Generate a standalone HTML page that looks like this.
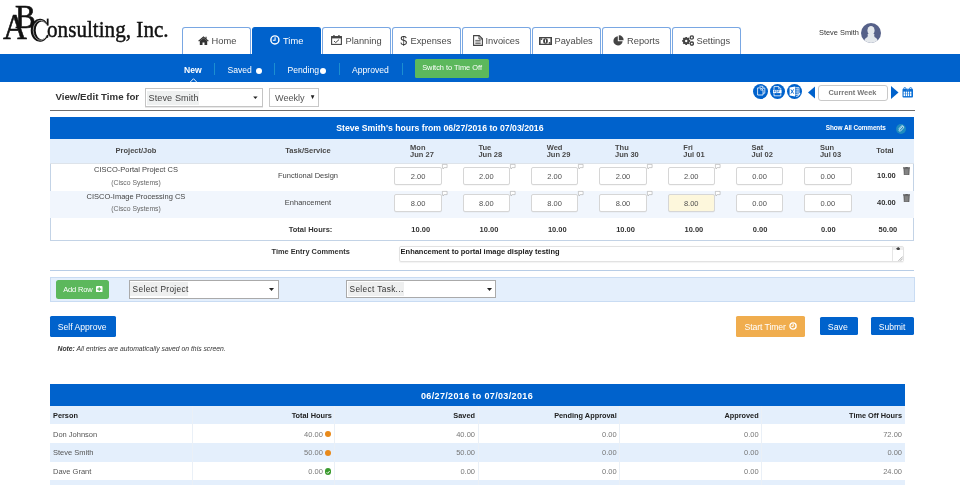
<!DOCTYPE html>
<html><head><meta charset="utf-8">
<style>
*{margin:0;padding:0;box-sizing:border-box}
html,body{width:960px;height:485px;overflow:hidden;background:#fff}
body{font-family:"Liberation Sans",sans-serif;color:#333;position:relative}
.a{position:absolute}
.ser{font-family:"Liberation Serif",serif;color:#111}
.tab{position:absolute;top:27px;height:27px;width:69px;border:1px solid #79a7e3;border-bottom:none;border-radius:3px 3px 0 0;background:#fff;color:#444;font-size:9px;line-height:26px;text-align:center;white-space:nowrap}
.tt{top:35px;font-size:9.3px;line-height:13px;color:#4a4a4a;white-space:nowrap}
.tab.act{background:#0062cc;border-color:#0062cc;color:#fff}
.bar{left:0;top:54px;width:960px;height:27.8px;background:#0062cc}
.sub{color:#fff;font-size:8.6px;line-height:12px;top:64px;white-space:nowrap}
.sep{top:63px;width:1px;height:12px;background:#1c8fd0}
.tbl{border:1px solid #c3d3e6}
.hd{background:#0062cc}
.lb{background:#e4effc}
.th{font-size:7.5px;font-weight:bold;color:#484848;white-space:nowrap}
.td{font-size:7.5px;color:#444;white-space:nowrap}
.inp{width:47.5px;height:17.5px;border:1px solid #d6d6d6;border-radius:2px;background:#fff;font-size:7.5px;color:#505050;text-align:center;line-height:17.2px;box-shadow:0 0.5px 0.5px rgba(0,0,0,0.06)}
.cm{overflow:visible}
.btn{color:#fff;border-radius:1.6px;text-align:center;white-space:nowrap}
.bt{font-family:"Liberation Sans",sans-serif;font-size:7.5px;color:#333;white-space:nowrap}
.bh{font-weight:bold;color:#222;font-size:7.35px}
.bv{color:#777;text-align:right}
</style></head><body><div style="position:absolute;left:0;top:0;width:960px;height:485px;will-change:transform">

<!-- logo -->
<div class="a ser" style="left:3.3px;top:8.5px;font-size:36px;line-height:36px;transform:scaleX(0.92);transform-origin:0 0;-webkit-text-stroke:0.6px #111">A</div>
<div class="a ser" style="left:14.8px;top:-2.5px;font-size:34.5px;line-height:36px;transform:scaleX(0.9);transform-origin:0 0;-webkit-text-stroke:0.7px #111">B</div>
<svg class="a" style="left:28px;top:16px" width="22" height="28" viewBox="28 16 22 28"><path d="M47.2 23.2 A9.2 11.5 0 1 0 47.4 36.9 L46.6 35.6 A6.0 9.0 0 1 1 46.3 24.6 Z" fill="#111"/><path d="M46.2 24.0 A7.3 10.0 0 1 0 46.4 36.2" fill="none" stroke="#fff" stroke-width="0.55"/><path d="M46.8 18.6 H48.6 V25.6 H46.8 Z" fill="#111"/><path d="M46.6 35.2 L48.3 34.6 L48.2 37.6 L46.8 38 Z" fill="#111"/></svg>
<div class="a ser" style="left:47px;top:15.4px;font-size:23px;line-height:30px;transform:scaleX(0.92);transform-origin:0 0;-webkit-text-stroke:0.45px #111;white-space:nowrap">onsulting, Inc.</div>

<!-- tabs -->
<div class="tab" style="left:182px"></div>
<div class="tab act" style="left:252px"></div>
<div class="tab" style="left:322px"></div>
<div class="tab" style="left:392px"></div>
<div class="tab" style="left:462px"></div>
<div class="tab" style="left:532px"></div>
<div class="tab" style="left:602px"></div>
<div class="tab" style="left:672px"></div>
<div class="a tt" style="left:211.5px">Home</div>
<div class="a tt" style="left:283px;color:#fff">Time</div>
<div class="a tt" style="left:345.5px">Planning</div>
<div class="a tt" style="left:410.5px">Expenses</div>
<div class="a tt" style="left:485.5px">Invoices</div>
<div class="a tt" style="left:554.5px">Payables</div>
<div class="a tt" style="left:627px">Reports</div>
<div class="a tt" style="left:696.5px">Settings</div>
<!-- tab icons -->
<svg class="a" style="left:197.5px;top:36px" width="11" height="9" viewBox="0 0 11 9"><path d="M5.5 0.3 L0.2 4.8 L1 5.6 L5.5 1.8 L10 5.6 L10.8 4.8 L8.6 2.9 V0.8 H7.5 V2 Z M1.8 5 V9 H4.5 V6.5 H6.5 V9 H9.2 V5 L5.5 2 Z" fill="#333"/></svg>
<svg class="a" style="left:269.8px;top:35.3px" width="9.8" height="9.8" viewBox="0 0 10 10"><circle cx="5" cy="5" r="4.1" fill="none" stroke="#fff" stroke-width="1.5"/><path d="M5.2 2.4 V5.4 H2.9" fill="none" stroke="#fff" stroke-width="1.1"/></svg>
<svg class="a" style="left:331px;top:35px" width="11" height="10" viewBox="0 0 11 10"><rect x="0.6" y="1.6" width="9.8" height="7.8" fill="none" stroke="#444" stroke-width="1.1"/><rect x="0.6" y="1.6" width="9.8" height="1.8" fill="#444"/><rect x="2.3" y="0" width="1.3" height="2.5" fill="#444"/><rect x="7.3" y="0" width="1.3" height="2.5" fill="#444"/><path d="M3 6 L4.7 7.6 L8 4.6" fill="none" stroke="#444" stroke-width="1"/></svg>
<div class="a" style="left:400.3px;top:33.6px;font-size:12.3px;line-height:14px;color:#333">$</div>
<svg class="a" style="left:472.5px;top:35px" width="10" height="11" viewBox="0 0 10 11"><path d="M0.6 0.6 H6.2 L9.4 3.8 V10.4 H0.6 Z" fill="none" stroke="#444" stroke-width="1.1"/><path d="M6 0.6 V4 H9.4" fill="none" stroke="#444" stroke-width="1"/><path d="M2.3 5.4 H7.7 M2.3 7 H7.7 M2.3 8.6 H7.7" stroke="#444" stroke-width="0.8"/></svg>
<svg class="a" style="left:539px;top:36.5px" width="13" height="8" viewBox="0 0 13 8"><rect x="0" y="0" width="13" height="8" fill="#444"/><rect x="1.6" y="1.3" width="9.8" height="5.4" fill="#fff"/><ellipse cx="6.5" cy="4" rx="2.4" ry="2.7" fill="#444"/><rect x="6" y="2.5" width="1" height="3" fill="#fff"/><rect x="1.6" y="1.3" width="1.6" height="1.6" fill="#444"/><rect x="9.8" y="5.1" width="1.6" height="1.6" fill="#444"/></svg>
<svg class="a" style="left:612.5px;top:34.5px" width="11" height="11" viewBox="0 0 11 11"><path d="M4.8 1.3 A4.6 4.6 0 1 0 9.6 6.2 H4.8 Z" fill="#444"/><path d="M5.8 0.3 A4.6 4.6 0 0 1 10.6 5.2 H5.8 Z" fill="#444"/></svg>
<svg class="a" style="left:681.5px;top:34.5px" width="12.5" height="11" viewBox="0 0 12.5 11"><g fill="#444"><circle cx="4.2" cy="6" r="3"/><path d="M3.4 1.9 h1.6 l0.3 1.2 l1.2 -0.6 l1.1 1.1 l-0.6 1.2 l1.2 0.3 v1.6 l-1.2 0.3 l0.6 1.2 l-1.1 1.1 l-1.2 -0.6 l-0.3 1.2 h-1.6 l-0.3 -1.2 l-1.2 0.6 l-1.1 -1.1 l0.6 -1.2 l-1.2 -0.3 v-1.6 l1.2 -0.3 l-0.6 -1.2 l1.1 -1.1 l1.2 0.6 z"/><circle cx="9.8" cy="2.5" r="2.3"/><circle cx="9.8" cy="8.6" r="2.3"/></g><circle cx="4.2" cy="6" r="1.2" fill="#fff"/><circle cx="9.8" cy="2.5" r="0.9" fill="#fff"/><circle cx="9.8" cy="8.6" r="0.9" fill="#fff"/></svg>

<!-- user -->
<div class="a" style="left:819px;top:27.3px;font-size:7.4px;line-height:11px;color:#333;white-space:nowrap">Steve Smith</div>
<svg class="a" style="left:861.4px;top:22.75px" width="20" height="20" viewBox="0 0 20 20"><defs><clipPath id="av"><circle cx="10" cy="10" r="10"/></clipPath></defs><circle cx="10" cy="10" r="10" fill="#566189"/><g clip-path="url(#av)" fill="#e4e8ec"><ellipse cx="10" cy="7.6" rx="3.6" ry="4.6"/><path d="M6.6 11 Q7.2 13.2 6.2 14.2 Q3.2 15.2 2.6 20 H17.4 Q16.8 15.2 13.8 14.2 Q12.8 13.2 13.4 11 Z"/></g></svg>

<!-- blue sub bar -->
<div class="a bar"></div>
<div class="a sub" style="left:184px;font-weight:bold">New</div>
<svg class="a" style="left:190px;top:77.5px" width="7" height="4" viewBox="0 0 7 4"><path d="M0.3 4 L3.5 0.7 L6.7 4" fill="none" stroke="#fff" stroke-width="0.9"/></svg>
<div class="a sep" style="left:214px"></div>
<div class="a sub" style="left:227.5px">Saved</div>
<div class="a" style="left:255.5px;top:68px;width:6px;height:6px;border-radius:50%;background:#fff"></div>
<div class="a sep" style="left:274px"></div>
<div class="a sub" style="left:287.5px">Pending</div>
<div class="a" style="left:319.5px;top:68px;width:6px;height:6px;border-radius:50%;background:#fff"></div>
<div class="a sep" style="left:338.5px"></div>
<div class="a sub" style="left:352px">Approved</div>
<div class="a sep" style="left:402px"></div>
<div class="a btn" style="left:415px;top:59px;width:74.2px;height:18.9px;background:#5cb85c;font-size:7.4px;line-height:18.4px;border-radius:1.5px">Switch to Time Off</div>

<!-- view/edit row -->
<div class="a" style="left:55.5px;top:91px;font-size:9.7px;line-height:12px;font-weight:bold;color:#333">View/Edit Time for</div>
<div class="a" style="left:145px;top:88px;width:117.5px;height:19px;border:1px solid #c4c4c4;background:#fff;box-shadow:0 1px 0 #e8e8e8"></div>
<div class="a" style="left:146.5px;top:91px;width:52.5px;height:14px;background:#eef0f0"></div>
<div class="a" style="left:148.5px;top:90.5px;font-size:9.1px;line-height:14px;color:#444;letter-spacing:0.1px">Steve Smith</div>
<svg class="a" style="left:252px;top:95px" width="7" height="5" viewBox="0 0 7 5"><path d="M1.2 1.4 H5.6 L3.4 4 Z" fill="#222"/></svg>
<div class="a" style="left:269px;top:88px;width:50px;height:18.5px;border:1px solid #c8c8c8;background:#fff"></div>
<div class="a" style="left:275px;top:91.5px;font-size:9.1px;line-height:13px;color:#555">Weekly</div>
<svg class="a" style="left:310px;top:94px" width="6" height="7" viewBox="0 0 6 7"><path d="M0.8 1.2 H4.4 L2.6 5.2 Z" fill="#222"/></svg>
<div class="a" style="left:50px;top:110px;width:864.5px;height:1px;background:#6e6e6e"></div>

<!-- export icons -->
<svg class="a" style="left:752.5px;top:84px" width="15" height="15" viewBox="0 0 15 15"><circle cx="7.5" cy="7.5" r="7.5" fill="#0062cc"/><path d="M6.4 2.2 H9.6 L11.8 4.4 V9.2 H10" fill="none" stroke="#fff" stroke-width="0.75"/><path d="M9.5 2.3 V4.5 H11.7" fill="none" stroke="#fff" stroke-width="0.6"/><path d="M4.6 3.9 H7.8 L10 6.1 V11 H4.6 Z" fill="#0062cc" stroke="#fff" stroke-width="0.8"/><path d="M7.7 4 V6.2 H9.9" fill="none" stroke="#fff" stroke-width="0.6"/></svg>
<svg class="a" style="left:769.5px;top:84px" width="15" height="15" viewBox="0 0 15 15"><circle cx="7.5" cy="7.5" r="7.5" fill="#0062cc"/><path d="M4 5.8 V2.6 H8.8 L10.8 4.6 V5.8 M10.8 9.2 V11.8 H4 V9.2" fill="none" stroke="#fff" stroke-width="0.8"/><path d="M8.6 2.6 V4.8 H10.8" fill="none" stroke="#fff" stroke-width="0.6"/><rect x="3" y="5.9" width="8.6" height="3.2" fill="#fff"/><path d="M4.2 8.4 V6.6 H5.2 V7.5 H4.2 M6.2 6.6 V8.4 H7.2 V6.6 Z M8.3 8.4 V6.6 H9.6 M8.3 7.5 H9.3" fill="none" stroke="#0062cc" stroke-width="0.5"/></svg>
<svg class="a" style="left:786.5px;top:84px" width="15" height="15" viewBox="0 0 15 15"><circle cx="7.5" cy="7.5" r="7.5" fill="#0062cc"/><path d="M8.4 3.6 H12 V10.6 H8.4" fill="none" stroke="#fff" stroke-width="0.7"/><path d="M8.6 5.4 H11.8 M8.6 7.1 H11.8 M8.6 8.8 H11.8 M10.2 3.6 V10.6" stroke="#fff" stroke-width="0.5"/><path d="M2.6 3.4 L8.2 2.6 V12.4 L2.6 11.6 Z" fill="#fff"/><path d="M3.9 5.4 L6.6 9.6 M6.6 5.4 L3.9 9.6" stroke="#0062cc" stroke-width="0.9"/><path d="M9.2 12.4 Q12 12.6 12.6 9.8" fill="none" stroke="#fff" stroke-width="0.9"/><path d="M11.6 10 L12.7 8.8 L13.6 10.2 Z" fill="#fff"/></svg>
<svg class="a" style="left:807.5px;top:86px" width="7.5" height="13" viewBox="0 0 7.5 13"><path d="M7.5 0 V13 L0 6.5 Z" fill="#0062cc"/></svg>
<div class="a" style="left:817.5px;top:85px;width:70px;height:15.5px;border:1px solid #c9c9c9;border-radius:3px;background:#fff;font-size:7.4px;font-weight:bold;color:#777;text-align:center;line-height:14px">Current Week</div>
<svg class="a" style="left:891px;top:86px" width="7.5" height="13" viewBox="0 0 7.5 13"><path d="M0 0 V13 L7.5 6.5 Z" fill="#0062cc"/></svg>
<svg class="a" style="left:902px;top:86.8px" width="11.5" height="11" viewBox="0 0 11.5 11"><rect x="0.5" y="1.8" width="10.5" height="8.7" rx="1" fill="#0a6fd6"/><circle cx="2.8" cy="1.6" r="1.1" fill="none" stroke="#0a6fd6" stroke-width="0.8"/><circle cx="8.6" cy="1.6" r="1.1" fill="none" stroke="#0a6fd6" stroke-width="0.8"/><path d="M4.4 3.4 Q5.75 1.8 7.1 3.4" fill="none" stroke="#7fb3ea" stroke-width="0.6"/><g fill="#fff"><rect x="1.6" y="4.6" width="1.4" height="2.1"/><rect x="3.7" y="4.6" width="1.4" height="2.1"/><rect x="5.8" y="4.6" width="1.4" height="2.1"/><rect x="8" y="4.6" width="1.4" height="2.1"/><rect x="1.6" y="7.1" width="1.4" height="2"/><rect x="3.7" y="7.1" width="1.4" height="2"/><rect x="5.8" y="7.1" width="1.4" height="2"/><rect x="8" y="7.1" width="1.4" height="2"/></g></svg>

<!-- main table -->
<div class="a tbl" style="left:49.5px;top:117px;width:864.5px;height:124px"></div>
<div class="a hd" style="left:49.5px;top:117px;width:864.5px;height:21.5px"></div>
<div class="a lb" style="left:50px;top:138.5px;width:863.5px;height:25.5px;border-bottom:1px solid #dde3ea"></div>
<div class="a" style="left:50px;top:191.2px;width:863.5px;height:27px;background:#f1f6fd"></div>
<div class="a" style="left:336.2px;top:122.5px;font-size:8.7px;line-height:11px;font-weight:bold;color:#fff;white-space:nowrap">Steve Smith's hours from 06/27/2016 to 07/03/2016</div>
<div class="a" style="left:825.8px;top:122.8px;font-size:6.4px;line-height:10px;font-weight:bold;color:#fff;letter-spacing:-0.1px">Show All Comments</div>
<svg class="a" style="left:895.7px;top:123.9px" width="10" height="10" viewBox="0 0 10 10"><circle cx="5" cy="5" r="4.9" fill="#1e8cc0"/><path d="M6.6 2.4 L3.2 6 A0.9 0.9 0 0 0 4.4 7.2 L7.2 4.2 A1.4 1.4 0 0 0 5.2 2.2 L2.6 5.2" fill="none" stroke="#fff" stroke-width="0.7"/></svg>
<div class="a th" style="left:86px;top:146px;width:100px;text-align:center;line-height:10px">Project/Job</div>
<div class="a th" style="left:258px;top:146px;width:100px;text-align:center;line-height:10px">Task/Service</div>
<div class="a th" style="left:860px;top:146px;width:50px;text-align:center;line-height:10px">Total</div>
<div class="a td" style="left:76px;top:165px;width:120px;text-align:center;line-height:10px">CISCO-Portal Project CS</div>
<div class="a td" style="left:76px;top:177.5px;width:120px;text-align:center;line-height:10px;font-size:6.8px;color:#666">(Cisco Systems)</div>
<div class="a td" style="left:76px;top:192px;width:120px;text-align:center;line-height:10px">CISCO-Image Processing CS</div>
<div class="a td" style="left:76px;top:204px;width:120px;text-align:center;line-height:10px;font-size:6.8px;color:#666">(Cisco Systems)</div>
<div class="a td" style="left:248px;top:171px;width:120px;text-align:center;line-height:10px">Functional Design</div>
<div class="a td" style="left:248px;top:197.5px;width:120px;text-align:center;line-height:10px">Enhancement</div>
<div class="a th" style="left:250.5px;top:224.7px;width:120px;text-align:center;line-height:10px;color:#333">Total Hours:</div>
<div class="a th" style="left:410.1px;top:143.6px;line-height:7.4px">Mon<br>Jun 27</div>
<div class="a inp" style="left:394.3px;top:167.1px">2.00</div>
<div class="a inp" style="left:394.3px;top:194.3px;background:#fff">8.00</div>
<svg class="a cm" style="left:441.7px;top:164.2px" width="5.5" height="5.5" viewBox="0 0 5.5 5.5"><path d="M0.4 0.4 H5.1 V3.6 H2.2 L1 5 V3.6 H0.4 Z" fill="#fff" stroke="#aaa" stroke-width="0.6"/></svg>
<svg class="a cm" style="left:441.7px;top:191.4px" width="5.5" height="5.5" viewBox="0 0 5.5 5.5"><path d="M0.4 0.4 H5.1 V3.6 H2.2 L1 5 V3.6 H0.4 Z" fill="#fff" stroke="#aaa" stroke-width="0.6"/></svg>
<div class="a th" style="left:411.3px;top:224.7px;line-height:10px;color:#333">10.00</div>
<div class="a th" style="left:478.4px;top:143.6px;line-height:7.4px">Tue<br>Jun 28</div>
<div class="a inp" style="left:462.6px;top:167.1px">2.00</div>
<div class="a inp" style="left:462.6px;top:194.3px;background:#fff">8.00</div>
<svg class="a cm" style="left:510.0px;top:164.2px" width="5.5" height="5.5" viewBox="0 0 5.5 5.5"><path d="M0.4 0.4 H5.1 V3.6 H2.2 L1 5 V3.6 H0.4 Z" fill="#fff" stroke="#aaa" stroke-width="0.6"/></svg>
<svg class="a cm" style="left:510.0px;top:191.4px" width="5.5" height="5.5" viewBox="0 0 5.5 5.5"><path d="M0.4 0.4 H5.1 V3.6 H2.2 L1 5 V3.6 H0.4 Z" fill="#fff" stroke="#aaa" stroke-width="0.6"/></svg>
<div class="a th" style="left:479.6px;top:224.7px;line-height:10px;color:#333">10.00</div>
<div class="a th" style="left:546.7px;top:143.6px;line-height:7.4px">Wed<br>Jun 29</div>
<div class="a inp" style="left:530.9px;top:167.1px">2.00</div>
<div class="a inp" style="left:530.9px;top:194.3px;background:#fff">8.00</div>
<svg class="a cm" style="left:578.3px;top:164.2px" width="5.5" height="5.5" viewBox="0 0 5.5 5.5"><path d="M0.4 0.4 H5.1 V3.6 H2.2 L1 5 V3.6 H0.4 Z" fill="#fff" stroke="#aaa" stroke-width="0.6"/></svg>
<svg class="a cm" style="left:578.3px;top:191.4px" width="5.5" height="5.5" viewBox="0 0 5.5 5.5"><path d="M0.4 0.4 H5.1 V3.6 H2.2 L1 5 V3.6 H0.4 Z" fill="#fff" stroke="#aaa" stroke-width="0.6"/></svg>
<div class="a th" style="left:547.9px;top:224.7px;line-height:10px;color:#333">10.00</div>
<div class="a th" style="left:615.0px;top:143.6px;line-height:7.4px">Thu<br>Jun 30</div>
<div class="a inp" style="left:599.2px;top:167.1px">2.00</div>
<div class="a inp" style="left:599.2px;top:194.3px;background:#fff">8.00</div>
<svg class="a cm" style="left:646.6px;top:164.2px" width="5.5" height="5.5" viewBox="0 0 5.5 5.5"><path d="M0.4 0.4 H5.1 V3.6 H2.2 L1 5 V3.6 H0.4 Z" fill="#fff" stroke="#aaa" stroke-width="0.6"/></svg>
<svg class="a cm" style="left:646.6px;top:191.4px" width="5.5" height="5.5" viewBox="0 0 5.5 5.5"><path d="M0.4 0.4 H5.1 V3.6 H2.2 L1 5 V3.6 H0.4 Z" fill="#fff" stroke="#aaa" stroke-width="0.6"/></svg>
<div class="a th" style="left:616.2px;top:224.7px;line-height:10px;color:#333">10.00</div>
<div class="a th" style="left:683.3px;top:143.6px;line-height:7.4px">Fri<br>Jul 01</div>
<div class="a inp" style="left:667.5px;top:167.1px">2.00</div>
<div class="a inp" style="left:667.5px;top:194.3px;background:#fdf7dc">8.00</div>
<svg class="a cm" style="left:714.9px;top:164.2px" width="5.5" height="5.5" viewBox="0 0 5.5 5.5"><path d="M0.4 0.4 H5.1 V3.6 H2.2 L1 5 V3.6 H0.4 Z" fill="#fff" stroke="#aaa" stroke-width="0.6"/></svg>
<svg class="a cm" style="left:714.9px;top:191.4px" width="5.5" height="5.5" viewBox="0 0 5.5 5.5"><path d="M0.4 0.4 H5.1 V3.6 H2.2 L1 5 V3.6 H0.4 Z" fill="#fff" stroke="#aaa" stroke-width="0.6"/></svg>
<div class="a th" style="left:684.5px;top:224.7px;line-height:10px;color:#333">10.00</div>
<div class="a th" style="left:751.6px;top:143.6px;line-height:7.4px">Sat<br>Jul 02</div>
<div class="a inp" style="left:735.8px;top:167.1px">0.00</div>
<div class="a inp" style="left:735.8px;top:194.3px;background:#fff">0.00</div>
<div class="a th" style="left:752.8px;top:224.7px;line-height:10px;color:#333">0.00</div>
<div class="a th" style="left:819.9px;top:143.6px;line-height:7.4px">Sun<br>Jul 03</div>
<div class="a inp" style="left:804.1px;top:167.1px">0.00</div>
<div class="a inp" style="left:804.1px;top:194.3px;background:#fff">0.00</div>
<div class="a th" style="left:821.1px;top:224.7px;line-height:10px;color:#333">0.00</div>
<div class="a th" style="left:877px;top:171px;line-height:10px;color:#333">10.00</div>
<div class="a th" style="left:877px;top:197.5px;line-height:10px;color:#333">40.00</div>
<div class="a th" style="left:878.5px;top:224.7px;line-height:10px;color:#333">50.00</div>
<svg class="a" style="left:902.8px;top:166.7px" width="7.2" height="8.3" viewBox="0 0 7.2 8.3"><rect x="0" y="0.3" width="7.2" height="1.2" fill="#555"/><rect x="2.4" y="0" width="2.4" height="0.8" fill="#555"/><path d="M0.8 1.5 H6.4 L6 8.3 H1.2 Z" fill="#777" stroke="#444" stroke-width="0.5"/><path d="M2.6 2.4 V7.4 M3.6 2.4 V7.4 M4.6 2.4 V7.4" stroke="#999" stroke-width="0.4"/></svg>
<svg class="a" style="left:902.8px;top:193.8px" width="7.2" height="8.3" viewBox="0 0 7.2 8.3"><rect x="0" y="0.3" width="7.2" height="1.2" fill="#555"/><rect x="2.4" y="0" width="2.4" height="0.8" fill="#555"/><path d="M0.8 1.5 H6.4 L6 8.3 H1.2 Z" fill="#777" stroke="#444" stroke-width="0.5"/><path d="M2.6 2.4 V7.4 M3.6 2.4 V7.4 M4.6 2.4 V7.4" stroke="#999" stroke-width="0.4"/></svg>

<!-- comments row -->
<div class="a th" style="left:271.5px;top:246.5px;line-height:10px;font-size:7.4px;color:#333">Time Entry Comments</div>
<div class="a" style="left:398.5px;top:246px;width:505.5px;height:15.5px;border:1px solid #e2e2e2;border-radius:2px;background:#fff;box-shadow:0 0.5px 1px rgba(0,0,0,0.05)"></div>
<div class="a th" style="left:400.6px;top:247px;line-height:10px;font-size:7.47px;color:#222">Enhancement to portal image display testing</div>
<div class="a" style="left:892.3px;top:246.5px;width:11px;height:14.5px;border-left:1px solid #e6e6e6;background:#fff"></div>
<div class="a" style="left:892.8px;top:246.5px;width:10.5px;height:3.8px;background:#eeeeee"></div>
<svg class="a" style="left:895.5px;top:246.6px" width="4.5" height="3.6" viewBox="0 0 4.5 3.6"><path d="M2.25 0 L4.5 1.8 L2.25 3.6 L0 1.8 Z" fill="#444"/></svg>
<svg class="a" style="left:897.5px;top:255.5px" width="5" height="5" viewBox="0 0 5 5"><path d="M0.5 4.8 L4.8 0.5 M2.5 4.8 L4.8 2.5" stroke="#777" stroke-width="0.6"/></svg>
<div class="a" style="left:50px;top:270px;width:864px;height:1px;background:#b8cde6"></div>

<!-- add row panel -->
<div class="a" style="left:49.5px;top:277px;width:865px;height:24.5px;background:#e4effc;border:1px solid #c9dcf3"></div>
<div class="a btn" style="left:56.2px;top:280px;width:52.8px;height:18.7px;background:#5cb85c;border-radius:2.5px"></div>
<div class="a" style="left:63.2px;top:284.8px;font-size:7.5px;line-height:10px;color:#fff;letter-spacing:-0.15px;white-space:nowrap">Add Row</div>
<svg class="a" style="left:96px;top:286px" width="6.5" height="6.3" viewBox="0 0 6.5 6.3"><rect x="0" y="0" width="6.5" height="6.3" rx="1.1" fill="#fff"/><path d="M3.25 1.2 V5.1 M1.3 3.15 H5.2" stroke="#5cb85c" stroke-width="1.2"/></svg>
<div class="a" style="left:129px;top:280px;width:149.6px;height:18.5px;border:1px solid #aaa;background:#fff"></div>
<div class="a" style="left:130.4px;top:282.2px;width:57.8px;height:14.2px;background:#eeefef"></div>
<div class="a" style="left:132.6px;top:284px;font-size:8.3px;line-height:10px;color:#333;letter-spacing:0.35px;white-space:nowrap">Select Project</div>
<svg class="a" style="left:269.2px;top:287.7px" width="5" height="3" viewBox="0 0 5 3"><path d="M0 0 H5 L2.5 3 Z" fill="#222"/></svg>
<div class="a" style="left:346.3px;top:280.3px;width:149.3px;height:18px;border:1px solid #aaa;background:#fff"></div>
<div class="a" style="left:347.6px;top:282.2px;width:56.4px;height:14.2px;background:#eeefef"></div>
<div class="a" style="left:349.5px;top:284px;font-size:8.3px;line-height:10px;color:#333;letter-spacing:0.35px;white-space:nowrap">Select Task...</div>
<svg class="a" style="left:486.5px;top:287.7px" width="5" height="3" viewBox="0 0 5 3"><path d="M0 0 H5 L2.5 3 Z" fill="#222"/></svg>

<!-- buttons -->
<div class="a btn" style="left:49.8px;top:315.8px;width:66px;height:20.8px;background:#0062cc"></div>
<div class="a" style="left:57.8px;top:321.8px;font-size:8.6px;line-height:10px;color:#fff;white-space:nowrap">Self Approve</div>
<div class="a" style="left:57.5px;top:344.6px;font-size:6.8px;line-height:8px;color:#333;font-style:italic;white-space:nowrap"><b>Note:</b> All entries are automatically saved on this screen.</div>
<div class="a btn" style="left:736.3px;top:315.8px;width:68.7px;height:21px;background:#f0ad4e"></div>
<div class="a" style="left:744.5px;top:321.8px;font-size:8.7px;line-height:10px;color:#fff;white-space:nowrap;letter-spacing:-0.1px">Start Timer</div>
<svg class="a" style="left:789.3px;top:322.4px" width="8" height="8" viewBox="0 0 8 8"><circle cx="4" cy="4" r="3.1" fill="none" stroke="#fff" stroke-width="1.3"/><path d="M4.2 1.9 V4.4 H2.5" fill="none" stroke="#fff" stroke-width="1"/></svg>
<div class="a btn" style="left:819.6px;top:317px;width:38.3px;height:18.3px;background:#0062cc"></div>
<div class="a" style="left:827.8px;top:321.6px;font-size:8.8px;line-height:10px;color:#fff;white-space:nowrap">Save</div>
<div class="a btn" style="left:871px;top:317px;width:43.2px;height:18.3px;background:#0062cc"></div>
<div class="a" style="left:878.8px;top:321.6px;font-size:8.5px;line-height:10px;color:#fff;white-space:nowrap">Submit</div>

<!-- bottom table -->
<div class="a hd" style="left:49.5px;top:384px;width:855px;height:21.8px"></div>
<div class="a lb" style="left:49.5px;top:405.8px;width:855px;height:18.7px"></div>
<div class="a lb" style="left:49.5px;top:443.1px;width:855px;height:18.7px"></div>
<div class="a lb" style="left:49.5px;top:480.4px;width:855px;height:19px"></div>
<div class="a" style="left:49.5px;top:389.8px;width:855px;text-align:center;font-size:9px;letter-spacing:0.35px;line-height:12px;font-weight:bold;color:#fff">06/27/2016 to 07/03/2016</div>
<div class="a" style="left:192.4px;top:405.8px;width:1px;height:80px;background:#eaf0f7"></div>
<div class="a" style="left:334.4px;top:405.8px;width:1px;height:80px;background:#eaf0f7"></div>
<div class="a" style="left:477.5px;top:405.8px;width:1px;height:80px;background:#eaf0f7"></div>
<div class="a" style="left:619.2px;top:405.8px;width:1px;height:80px;background:#eaf0f7"></div>
<div class="a" style="left:761.2px;top:405.8px;width:1px;height:80px;background:#eaf0f7"></div>
<div class="a bt bh" style="left:53px;top:410.7px;line-height:10px">Person</div>
<div class="a bt bh" style="left:192.4px;top:410.7px;width:139.5px;text-align:right;line-height:10px">Total Hours</div>
<div class="a bt bh" style="left:334.4px;top:410.7px;width:140.6px;text-align:right;line-height:10px">Saved</div>
<div class="a bt bh" style="left:477.5px;top:410.7px;width:139.2px;text-align:right;line-height:10px">Pending Approval</div>
<div class="a bt bh" style="left:619.2px;top:410.7px;width:139.5px;text-align:right;line-height:10px">Approved</div>
<div class="a bt bh" style="left:761.2px;top:410.7px;width:140.8px;text-align:right;line-height:10px">Time Off Hours</div>
<div class="a bt" style="left:53px;top:429.5px;line-height:10px;color:#555">Don Johnson</div>
<div class="a bt bv" style="left:192.4px;top:429.5px;width:130.5px;line-height:10px">40.00</div>
<div class="a bt bv" style="left:334.4px;top:429.5px;width:140.6px;line-height:10px">40.00</div>
<div class="a bt bv" style="left:477.5px;top:429.5px;width:139.2px;line-height:10px">0.00</div>
<div class="a bt bv" style="left:619.2px;top:429.5px;width:139.5px;line-height:10px">0.00</div>
<div class="a bt bv" style="left:761.2px;top:429.5px;width:140.8px;line-height:10px">72.00</div>
<div class="a" style="left:325.3px;top:431.0px;width:6.2px;height:6.2px;border-radius:50%;background:#e8891a"></div>
<div class="a bt" style="left:53px;top:448.2px;line-height:10px;color:#555">Steve Smith</div>
<div class="a bt bv" style="left:192.4px;top:448.2px;width:130.5px;line-height:10px">50.00</div>
<div class="a bt bv" style="left:334.4px;top:448.2px;width:140.6px;line-height:10px">50.00</div>
<div class="a bt bv" style="left:477.5px;top:448.2px;width:139.2px;line-height:10px">0.00</div>
<div class="a bt bv" style="left:619.2px;top:448.2px;width:139.5px;line-height:10px">0.00</div>
<div class="a bt bv" style="left:761.2px;top:448.2px;width:140.8px;line-height:10px">0.00</div>
<div class="a" style="left:325.3px;top:449.7px;width:6.2px;height:6.2px;border-radius:50%;background:#e8891a"></div>
<div class="a bt" style="left:53px;top:466.9px;line-height:10px;color:#555">Dave Grant</div>
<div class="a bt bv" style="left:192.4px;top:466.9px;width:130.5px;line-height:10px">0.00</div>
<div class="a bt bv" style="left:334.4px;top:466.9px;width:140.6px;line-height:10px">0.00</div>
<div class="a bt bv" style="left:477.5px;top:466.9px;width:139.2px;line-height:10px">0.00</div>
<div class="a bt bv" style="left:619.2px;top:466.9px;width:139.5px;line-height:10px">0.00</div>
<div class="a bt bv" style="left:761.2px;top:466.9px;width:140.8px;line-height:10px">24.00</div>
<div class="a" style="left:325.3px;top:468.4px;width:6.2px;height:6.2px;border-radius:50%;background:#3a9a2e"></div>
<svg class="a" style="left:325.3px;top:468.9px" width="6.2" height="6.2" viewBox="0 0 6.2 6.2"><path d="M1.6 3.2 L2.7 4.3 L4.7 2" fill="none" stroke="#fff" stroke-width="0.9"/></svg>

</div></body></html>
